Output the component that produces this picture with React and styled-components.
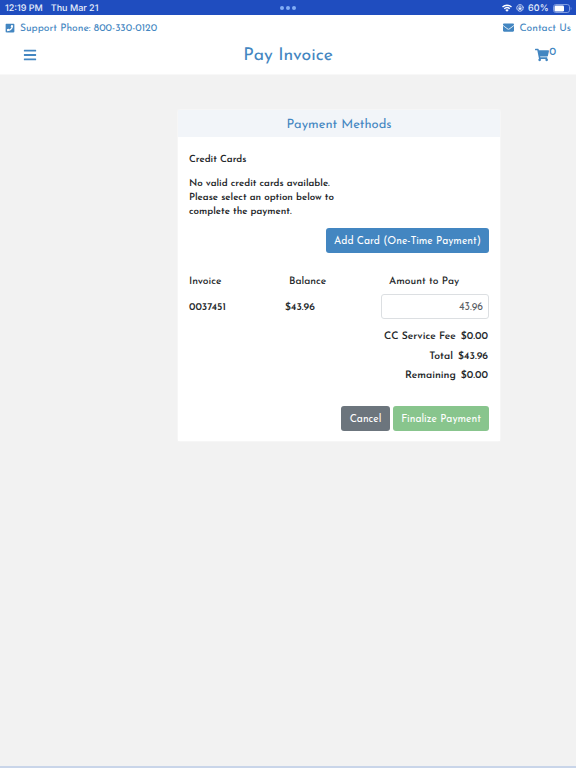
import React from 'react';
import styled, { createGlobalStyle, css, ThemeProvider } from 'styled-components';
import {
  FaBars,
  FaEnvelope,
  FaPhoneSquare,
  FaShoppingCart,
} from 'react-icons/fa';

const theme = {
  blue: '#4386c1',
  statusBlue: '#1f4dbf',
  dark: '#24272a',
  grey: '#6c757d',
  green: '#88c58d',
  white: '#ffffff',
  background: '#f2f2f2',
  fontFamily: "'Josefin Sans', Lato, sans-serif",
  fontFamilySystem: 'Inter, sans-serif',
};

const GlobalStyle = createGlobalStyle`
  *, *::before, *::after {
    box-sizing: border-box;
  }

  body {
    margin: 0;
    background-color: #f2f2f2;
    text-rendering: geometricPrecision;
  }
`;

const Page = styled.div`
  display: flex;
  flex-direction: column;
  width: 100%;
  height: 100vh;
  overflow: hidden;
  border-bottom: 2px solid #c9d5e9;
  background-color: ${({ theme }) => theme.background};
  color: ${({ theme }) => theme.dark};
  font-family: ${({ theme }) => theme.fontFamily};
  font-size: 10px;
`;

const StatusBar = styled.div`
  display: grid;
  grid-template-columns: 1fr auto 1fr;
  align-items: center;
  flex: none;
  height: 15px;
  padding: 0 4px 0 5px;
  background-color: ${({ theme }) => theme.statusBlue};
  color: #e6edfb;
  font-family: ${({ theme }) => theme.fontFamilySystem};
  font-size: 9px;
  font-weight: 500;
  line-height: 15px;
`;

const StatusGroup = styled.div`
  display: flex;
  align-items: center;
  gap: ${({ $gap }) => $gap}px;
  justify-content: ${({ $end }) => ($end ? 'flex-end' : 'flex-start')};
`;

const StatusText = styled.span`
  padding-top: 1px;
  letter-spacing: ${({ $track = 0 }) => $track}px;
`;

const Dots = styled.div`
  display: flex;
  gap: 2px;
  margin-right: 1px;
`;

const Dot = styled.span`
  width: 4px;
  height: 4px;
  border-radius: 50%;
  background-color: #82adf5;
`;

const Header = styled.header`
  flex: none;
  height: 60px;
  border-bottom: 1px solid #f8f8f8;
  background-color: ${({ theme }) => theme.white};
  color: ${({ theme }) => theme.blue};
`;

const ContactBar = styled.div`
  display: flex;
  justify-content: space-between;
  height: 25px;
  padding: 0 5px;
`;

const ContactLink = styled.a`
  display: flex;
  align-items: center;
  gap: 5px;
  font-size: 10.3px;

  span {
    padding-top: 2px;
  }
`;

const NavBar = styled.div`
  display: grid;
  grid-template-columns: 1fr auto 1fr;
  align-items: center;
  height: 30px;
  padding: 0 20px 0 23px;
`;

const Title = styled.h1`
  margin: 0 3px 0 0;
  padding-top: 3px;
  font-size: 17.6px;
  font-weight: 400;
`;

const Cart = styled.div`
  display: flex;
  justify-content: flex-end;
  align-items: center;
`;

const CartCount = styled.sup`
  align-self: flex-start;
  font-size: 11px;
  font-weight: 500;
  line-height: 10px;
`;

const Panel = styled.section`
  flex: none;
  width: 322px;
  margin: 35px 0 0 178px;
  background-color: ${({ theme }) => theme.white};
  box-shadow: 0 0 2px rgba(255, 255, 255, 0.9);
`;

const PanelHeading = styled.h2`
  height: 27px;
  margin: 0;
  background-color: #f2f5f9;
  color: ${({ theme }) => theme.blue};
  font-size: 12.9px;
  font-weight: 400;
  line-height: 31px;
  text-align: center;
`;

const PanelBody = styled.div`
  display: flex;
  flex-direction: column;
  height: 304px;
  padding: 17px 11px 10px;
`;

const SectionTitle = styled.h3`
  margin: 0 0 10px;
  font-size: 9.8px;
  font-weight: 600;
  line-height: 14px;
`;

const Notice = styled.p`
  width: 160px;
  margin: 0 0 8px;
  font-size: 9.8px;
  font-weight: 600;
  line-height: 14px;
  white-space: nowrap;
`;

const buttonColors = {
  primary: css`
    background-color: ${({ theme }) => theme.blue};
  `,
  secondary: css`
    background-color: ${({ theme }) => theme.grey};
  `,
  success: css`
    background-color: ${({ theme }) => theme.green};
  `,
};

const Button = styled.button`
  width: ${({ $width }) => $width}px;
  height: 25px;
  padding: 1px 0 0;
  border: none;
  border-radius: 3px;
  color: ${({ theme }) => theme.white};
  font-family: inherit;
  font-size: 10.35px;
  white-space: nowrap;
  ${({ $variant }) => buttonColors[$variant]};
`;

const ButtonRow = styled.div`
  display: flex;
  justify-content: flex-end;
  gap: 3px;
`;

const InvoiceGrid = styled.div`
  display: grid;
  grid-template-columns: 96px 96px 108px;
  align-items: center;
  margin-top: 21px;
  font-weight: 500;
  font-size: 10.3px;
`;

const HeadCell = styled.div`
  height: 20px;
  padding-left: ${({ $indent = 0 }) => $indent}px;
  line-height: 16px;
`;

const Cell = styled.div`
  padding-top: 2px;
  font-weight: 600;
`;

const AmountInput = styled.input`
  width: 108px;
  height: 25px;
  padding: 1px 5px 0;
  border: 1px solid #dcdfe2;
  border-radius: 3px;
  outline: none;
  background-color: ${({ theme }) => theme.white};
  color: #5c6166;
  font-family: inherit;
  font-size: 10.4px;
  text-align: right;
`;

const Totals = styled.div`
  display: flex;
  flex-direction: column;
  align-items: flex-end;
  margin: 8px 1px 20.5px 0;
  font-size: 10.4px;
  font-weight: 600;
  line-height: 19.5px;
`;

const TotalLine = styled.div`
  display: flex;
  gap: 5px;
`;

const TotalText = styled.span`
  white-space: nowrap;
`;

const totals = [
  { label: 'CC Service Fee', value: '$0.00' },
  { label: 'Total', value: '$43.96' },
  { label: 'Remaining', value: '$0.00' },
];

const WifiIcon = () => (
  <svg width="10" height="8" viewBox="0 0 20 16" fill="none" stroke="#fff">
    <path d="M1 6a13 13 0 0 1 18 0M4.5 9.5a8 8 0 0 1 11 0" strokeWidth="2.8" />
    <path d="M10 15.5 6.5 12a5 5 0 0 1 7 0Z" fill="#fff" stroke="none" />
  </svg>
);

const RotationLockIcon = () => (
  <svg width="8" height="8" viewBox="0 0 16 16" fill="none" stroke="#e6edfb">
    <path d="M14.2 10A6.5 6.5 0 1 1 14.5 7" strokeWidth="1.7" />
    <path d="m12 7 2.5 2L16 6" strokeWidth="1.5" />
    <path d="M6 8V6a2 2 0 0 1 4 0v2" strokeWidth="1.4" />
    <rect x="5" y="7.5" width="6" height="4" fill="#e6edfb" stroke="none" />
  </svg>
);

const BatteryIcon = () => (
  <svg width="19" height="9" viewBox="0 0 19 9">
    <rect x="0.5" y="0.5" width="16" height="8" rx="2.3" fill="none" stroke="#7f9ce0" />
    <rect x="1.5" y="1.5" width="9.5" height="6" rx="1.2" fill="#fff" />
    <path d="M17.7 3v3c1-.4 1-2.6 0-3" fill="#7f9ce0" />
  </svg>
);

const App = () => (
  <ThemeProvider theme={theme}>
    <GlobalStyle />
    <Page>
      <StatusBar>
        <StatusGroup $gap={8}>
          <StatusText>12:19 PM</StatusText>
          <StatusText>Thu Mar 21</StatusText>
        </StatusGroup>
        <Dots>
          <Dot />
          <Dot />
          <Dot />
        </Dots>
        <StatusGroup $gap={4} $end>
          <WifiIcon />
          <RotationLockIcon />
          <StatusText $track={0.2}>60%</StatusText>
          <BatteryIcon />
        </StatusGroup>
      </StatusBar>
      <Header>
        <ContactBar>
          <ContactLink>
            <FaPhoneSquare size={10} />
            <span>Support Phone: 800-330-0120</span>
          </ContactLink>
          <ContactLink>
            <FaEnvelope size={11} />
            <span>Contact Us</span>
          </ContactLink>
        </ContactBar>
        <NavBar>
          <FaBars size={14} />
          <Title>Pay Invoice</Title>
          <Cart>
            <FaShoppingCart size={14} />
            <CartCount>0</CartCount>
          </Cart>
        </NavBar>
      </Header>
      <Panel>
        <PanelHeading>Payment Methods</PanelHeading>
        <PanelBody>
          <SectionTitle>Credit Cards</SectionTitle>
          <Notice>
            No valid credit cards available.
            <br />
            Please select an option below to
            <br />
            complete the payment.
          </Notice>
          <ButtonRow>
            <Button $variant="primary" $width={163}>
              Add Card (One-Time Payment)
            </Button>
          </ButtonRow>
          <InvoiceGrid>
            <HeadCell>Invoice</HeadCell>
            <HeadCell $indent={4}>Balance</HeadCell>
            <HeadCell $indent={8}>Amount to Pay</HeadCell>
            <Cell>0037451</Cell>
            <Cell>$43.96</Cell>
            <AmountInput defaultValue="43.96" />
          </InvoiceGrid>
          <Totals>
            {totals.map(({ label, value }) => (
              <TotalLine key={label}>
                <TotalText>{label}</TotalText>
                <TotalText>{value}</TotalText>
              </TotalLine>
            ))}
          </Totals>
          <ButtonRow>
            <Button $variant="secondary" $width={49}>
              Cancel
            </Button>
            <Button $variant="success" $width={96}>
              Finalize Payment
            </Button>
          </ButtonRow>
        </PanelBody>
      </Panel>
    </Page>
  </ThemeProvider>
);

export default App;
